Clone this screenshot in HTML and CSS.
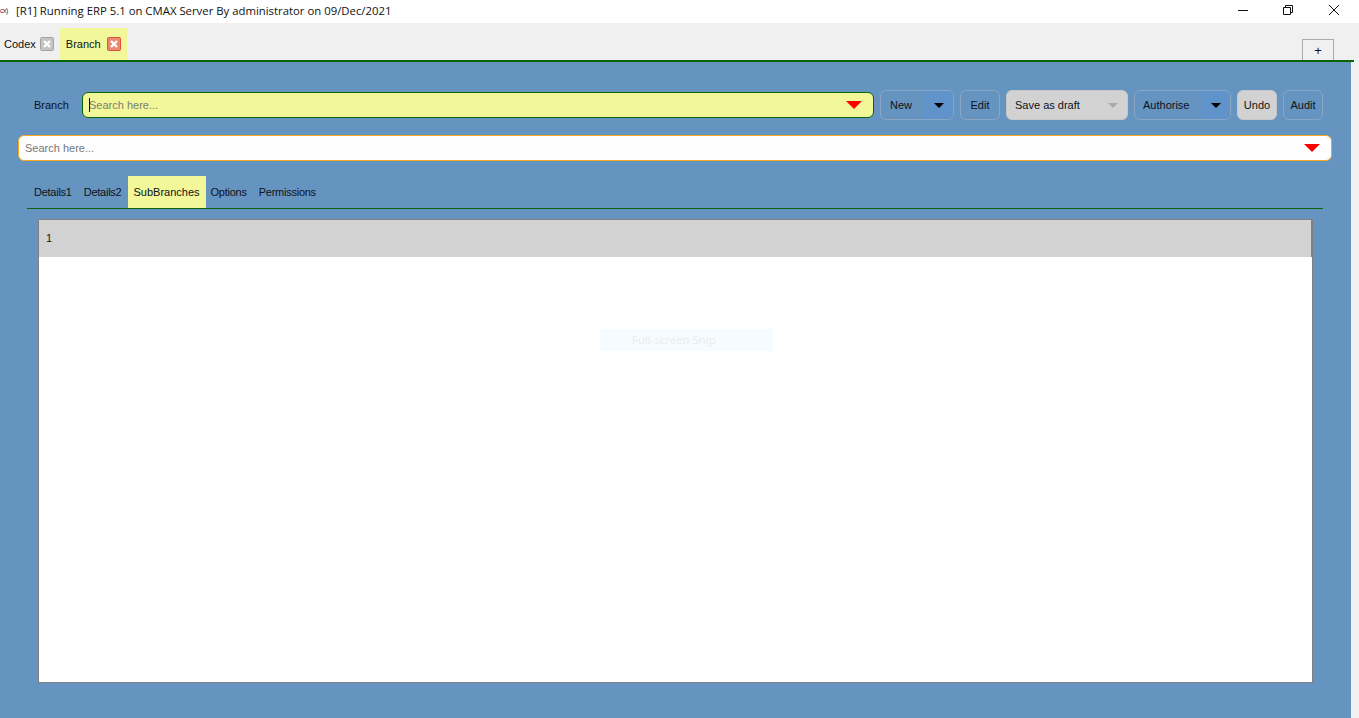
FILE: index.html
```html
<!DOCTYPE html>
<html lang="en">
<head>
    <meta charset="UTF-8">
    <meta name="viewport" content="width=device-width, initial-scale=1.0">
    <title>Running ERP</title>
    <link rel="stylesheet" href="styles.css">
</head>
<body>
    <div class="titlebar">
        <span class="app-icon">cx)</span>
        <span class="title-text">[R1] Running ERP 5.1 on CMAX Server By administrator on 09/Dec/2021</span>
        <div class="win-buttons">
            <svg class="win-icon min" viewBox="0 0 10 10"><path d="M0 5.5H10" stroke="#111" fill="none"/></svg>
            <svg class="win-icon" viewBox="0 0 10 10"><path d="M2.5 2V.5H9.5V7.5H8M.5 2.5H7.5V9.5H.5Z" stroke="#111" fill="none"/></svg>
            <svg class="win-icon" viewBox="0 0 10 10"><path d="M0 0L10 10M10 0L0 10" stroke="#111" fill="none"/></svg>
        </div>
    </div>

    <div class="tabstrip">
        <div class="doc-tab">Codex
            <svg class="close-btn" viewBox="0 0 14 14"><rect x=".5" y=".5" width="13" height="13" rx="1" fill="#c4c4c4" stroke="#a4a4a4"/><path d="M4 4L10 10M10 4L4 10" stroke="#fff" stroke-width="2.4"/></svg>
        </div>
        <div class="doc-tab active">Branch
            <svg class="close-btn" viewBox="0 0 14 14"><rect x=".5" y=".5" width="13" height="13" rx="1" fill="#e88a70" stroke="#e0503a"/><path d="M4 4L10 10M10 4L4 10" stroke="#fff" stroke-width="2.4"/></svg>
        </div>
        <button class="add-tab">+</button>
    </div>

    <div class="main">
        <div class="toolbar">
            <span class="field-label">Branch</span>
            <div class="search-box yellow">
                <span class="caret"></span>
                <span class="placeholder">Search here...</span>
                <span class="arrow-red"></span>
            </div>
            <div class="btn split"><span class="btn-text">New</span><span class="drop"><i class="arrow-black"></i></span></div>
            <div class="btn edit">Edit</div>
            <div class="btn draft"><span class="btn-text">Save as draft</span><i class="arrow-grey"></i></div>
            <div class="btn split auth"><span class="btn-text">Authorise</span><span class="drop"><i class="arrow-black"></i></span></div>
            <div class="btn undo">Undo</div>
            <div class="btn audit">Audit</div>
        </div>

        <div class="search-box second">
            <span class="placeholder">Search here...</span>
            <span class="arrow-red"></span>
        </div>

        <div class="subtabs">
            <div class="subtab">Details1</div>
            <div class="subtab">Details2</div>
            <div class="subtab active">SubBranches</div>
            <div class="subtab">Options</div>
            <div class="subtab">Permissions</div>
        </div>

        <div class="panel">
            <div class="panel-head">1</div>
        </div>
    </div>

    <div class="snip">Full-screen Snip</div>
</body>
</html>
```

FILE: styles.css
```css
html, body {
    margin: 0;
    padding: 0;
}
body {
    width: 1359px;
    height: 718px;
    overflow: hidden;
    background-color: #f0f0f0;
    font-family: 'Liberation Sans', Arial, sans-serif;
    font-size: 11px;
    color: #0c1220;
}
.titlebar {
    height: 23px;
    background-color: white;
    display: flex;
    align-items: center;
}
.app-icon {
    width: 16px;
    font-size: 7px;
    letter-spacing: -0.5px;
    color: #602040;
    white-space: nowrap;
    margin-top: -3px;
}
.title-text {
    font-family: 'Open Sans', sans-serif;
    font-size: 11.35px;
    color: #111;
    margin-top: -2px;
}
.win-buttons {
    margin-left: auto;
    margin-right: 20px;
    display: flex;
    gap: 36px;
    align-self: flex-start;
    padding-top: 5px;
}
.win-icon {
    width: 10px;
    height: 10px;
    display: block;
}
.win-icon.min {
    margin-right: -1px;
}

.tabstrip {
    height: 37px;
    width: 1354px;
    display: flex;
    align-items: flex-end;
    border-bottom: 2px solid #0a640a;
    position: relative;
}
.doc-tab {
    height: 32px;
    display: flex;
    align-items: center;
    gap: 4px;
    padding: 0 6px 0 4px;
}
.doc-tab.active {
    background-color: #f2f89a;
    padding: 0 6px 0 6px;
    gap: 6px;
}
.close-btn {
    width: 14px;
    height: 14px;
    display: block;
}
.add-tab {
    position: absolute;
    left: 1302px;
    bottom: 0;
    width: 32px;
    height: 21px;
    border: 1px solid #aaa;
    border-bottom: none;
    background-color: #f0f0f0;
    font-family: 'Liberation Sans', sans-serif;
    font-size: 13px;
    padding: 0;
    color: #111;
}

.main {
    width: 1351px;
    height: 656px;
    background-color: #6694c1;
    overflow: hidden;
}
.toolbar {
    display: flex;
    align-items: center;
    height: 30px;
    margin-top: 28px;
    padding-left: 34px;
}
.field-label {
    width: 48px;
}
.search-box {
    height: 24px;
    border: 1px solid #0a640a;
    border-radius: 6px;
    display: flex;
    align-items: center;
    background-color: #f2f89a;
    position: relative;
}
.search-box.yellow {
    width: 790px;
    margin-right: 6px;
}
.search-box.second {
    width: 1312px;
    margin: 15px 0 0 18px;
    background-color: #fefefe;
    border-color: #f5a623;
}
.placeholder {
    margin-left: 6px;
    color: #7b7f70;
}
.second .placeholder {
    color: #777;
}
.caret {
    position: absolute;
    left: 6px;
    top: 5px;
    width: 1px;
    height: 14px;
    background-color: #111;
}
.arrow-red {
    position: absolute;
    right: 11px;
    top: 8px;
    border-left: 8px solid transparent;
    border-right: 8px solid transparent;
    border-top: 8px solid #f00;
}
.btn {
    height: 28px;
    line-height: 28px;
    border: 1px solid #8aa6c4;
    border-radius: 6px;
    margin-right: 6px;
    display: flex;
    text-align: center;
    justify-content: center;
    box-sizing: content-box;
}
.btn.edit {
    width: 38px;
}
.btn.undo {
    width: 38px;
    background-color: #d2d2d2;
    border-color: #c8c8c8;
}
.btn.audit {
    width: 38px;
    margin-right: 0;
}
.btn.split {
    width: 72px;
    overflow: hidden;
    justify-content: flex-start;
}
.btn.auth {
    width: 95px;
}
.btn-text {
    padding-left: 9px;
    flex-grow: 1;
    text-align: left;
}
.btn.auth .btn-text, .btn.draft .btn-text {
    padding-left: 8px;
}
.drop {
    width: 29px;
    background-color: #5f93c9;
    display: flex;
    align-items: center;
    justify-content: center;
}
.arrow-black {
    border-left: 5px solid transparent;
    border-right: 5px solid transparent;
    border-top: 5px solid #000;
}
.btn.draft {
    width: 120px;
    background-color: #d2d2d2;
    border-color: #c8c8c8;
    align-items: center;
}
.arrow-grey {
    border-left: 5px solid transparent;
    border-right: 5px solid transparent;
    border-top: 5px solid #a8a8a8;
    margin-right: 9px;
}

.subtabs {
    display: flex;
    width: 1296px;
    height: 32px;
    margin: 15px 0 0 27px;
    border-bottom: 1px solid #0a640a;
}
.subtab {
    line-height: 32px;
    padding: 0 6px;
    letter-spacing: -0.25px;
}
.subtab:first-child {
    padding-left: 7px;
}
.subtab.active {
    background-color: #f2f89a;
    margin-right: -1px;
    letter-spacing: 0;
}

.panel {
    width: 1273px;
    height: 462px;
    margin: 10px 0 0 38px;
    background-color: white;
    border: 1px solid #808080;
    box-sizing: content-box;
}
.panel-head {
    height: 37px;
    line-height: 37px;
    padding-left: 7px;
    background-color: #d2d2d2;
    color: #102010;
    border-right: 1px solid #808080;
}

.snip {
    position: absolute;
    left: 600px;
    top: 329px;
    width: 173px;
    height: 22px;
    line-height: 22px;
    padding-left: 32px;
    box-sizing: border-box;
    background-color: #f6fbff;
    color: #ebebeb;
    font-family: 'Open Sans', sans-serif;
    font-size: 11.4px;
}
```
